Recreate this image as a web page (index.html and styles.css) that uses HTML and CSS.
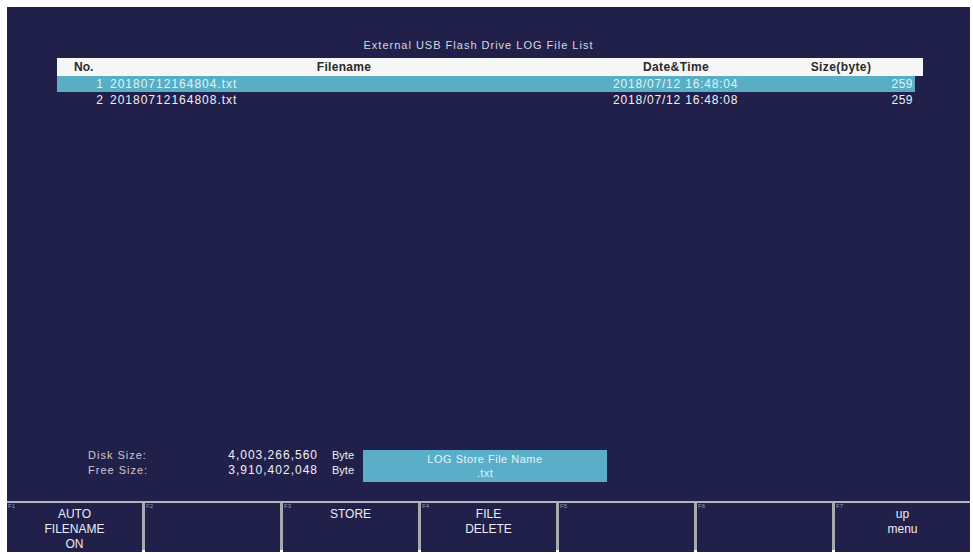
FILE: index.html
```html
<!DOCTYPE html>
<html>
<head>
<meta charset="utf-8">
<link rel="stylesheet" href="styles.css">
</head>
<body>
<div class="screen">
  <div class="main">
    <div class="title">External USB Flash Drive LOG File List</div>
    <div class="table">
      <div class="thead">
        <div class="h-no">No.</div>
        <div class="h-name">Filename</div>
        <div class="h-date">Date&amp;Time</div>
        <div class="h-size">Size(byte)</div>
      </div>
      <div class="row selected">
        <div class="c-no">1</div>
        <div class="c-name">20180712164804.txt</div>
        <div class="c-date">2018/07/12 16:48:04</div>
        <div class="c-size">259</div>
      </div>
      <div class="row">
        <div class="c-no">2</div>
        <div class="c-name">20180712164808.txt</div>
        <div class="c-date">2018/07/12 16:48:08</div>
        <div class="c-size">259</div>
      </div>
    </div>
    <div class="info">
      <div class="labels"><div>Disk Size:</div><div>Free Size:</div></div>
      <div class="nums"><div>4,003,266,560</div><div>3,910,402,048</div></div>
      <div class="units"><div>Byte</div><div>Byte</div></div>
      <div class="fname-box"><div>LOG Store File Name</div><div>.txt</div></div>
    </div>
  </div>
  <div class="keys">
    <div class="key"><span class="fn">F1</span><div class="klabel">AUTO<br>FILENAME<br>ON</div></div>
    <div class="key"><span class="fn">F2</span><div class="klabel"></div></div>
    <div class="key"><span class="fn">F3</span><div class="klabel">STORE</div></div>
    <div class="key"><span class="fn">F4</span><div class="klabel">FILE<br>DELETE</div></div>
    <div class="key"><span class="fn">F5</span><div class="klabel"></div></div>
    <div class="key"><span class="fn">F6</span><div class="klabel"></div></div>
    <div class="key"><span class="fn">F7</span><div class="klabel">up<br>menu</div></div>
  </div>
</div>
</body>
</html>
```

FILE: styles.css
```css
html, body {
  margin: 0;
  padding: 0;
  background: #ffffff;
}
body {
  font-family: "Liberation Sans", Arial, sans-serif;
  width: 973px;
  height: 554px;
  overflow: hidden;
}
.screen {
  margin: 7px 0 0 7px;
  width: 963px;
  height: 543px;
  background: #21204a;
  display: flex;
  flex-direction: column;
  color: #e6e6ee;
}
.main {
  flex: 1;
  display: flex;
  flex-direction: column;
  padding: 32px 0 19px 0;
}
.title {
  font-size: 11px;
  line-height: 12px;
  letter-spacing: 1px;
  text-align: center;
  color: #d8d8e0;
  padding-right: 20px;
}
.table {
  margin: 7px 0 0 50px;
  width: 866px;
  flex: 1;
}
.thead {
  display: grid;
  grid-template-columns: 53px 468px 196px 134px 15px;
  height: 18px;
  line-height: 18px;
  background: #f6f6f6;
  color: #2a2a2a;
  font-weight: bold;
  font-size: 12px;
  white-space: nowrap;
}
.h-no { padding-left: 17px; }
.h-name, .h-date, .h-size { text-align: center; }
.h-name { letter-spacing: 0.3px; }
.h-date { letter-spacing: 0.4px; }
.h-size { letter-spacing: 0.4px; }
.row {
  display: grid;
  grid-template-columns: 46px 7px 503px 127px 173px;
  width: 858px;
  height: 16px;
  line-height: 16px;
  font-size: 12px;
  letter-spacing: 1px;
  color: #f0f0f6;
  white-space: nowrap;
}
.row .c-no { grid-column: 1; text-align: right; letter-spacing: 0; }
.row .c-name { grid-column: 3; }
.row .c-date { grid-column: 4; letter-spacing: 0.8px; }
.row .c-size { grid-column: 5; text-align: right; letter-spacing: 0.5px; }
.row.selected {
  background: #5aaec4;
  color: #dcf5fc;
}
.info {
  display: flex;
  align-items: flex-start;
  padding-left: 81px;
  font-size: 12px;
  line-height: 15px;
  white-space: nowrap;
}
.labels {
  width: 110px;
  letter-spacing: 1px;
  color: #c8c8d2;
  font-size: 11px;
  margin-top: -2px;
}
.nums {
  width: 120px;
  text-align: right;
  letter-spacing: 1px;
  color: #f0f0f6;
  margin-top: -2px;
}
.units {
  margin-left: 14px;
  width: 31px;
  font-size: 11px;
  color: #f0f0f6;
  margin-top: -2px;
}
.fname-box {
  width: 244px;
  height: 32px;
  background: #5aaec8;
  color: #e2f5fb;
  text-align: center;
  font-size: 11px;
  line-height: 14px;
  letter-spacing: 0.5px;
  padding-top: 2px;
  box-sizing: border-box;
}
.keys {
  height: 49px;
  display: grid;
  grid-template-columns: repeat(7, 1fr);
  gap: 3px;
  background: #a9a9b2;
  border-top: 2px solid #b4b4bc;
  box-sizing: border-box;
}
.key {
  background: #21204a;
  position: relative;
  display: flex;
  justify-content: center;
}
.fn {
  position: absolute;
  left: 1px;
  top: 0;
  font-size: 6px;
  line-height: 7px;
  color: #9c9cae;
}
.klabel {
  text-align: center;
  font-size: 12px;
  line-height: 15px;
  color: #ececf2;
  padding-top: 4px;
}
```
